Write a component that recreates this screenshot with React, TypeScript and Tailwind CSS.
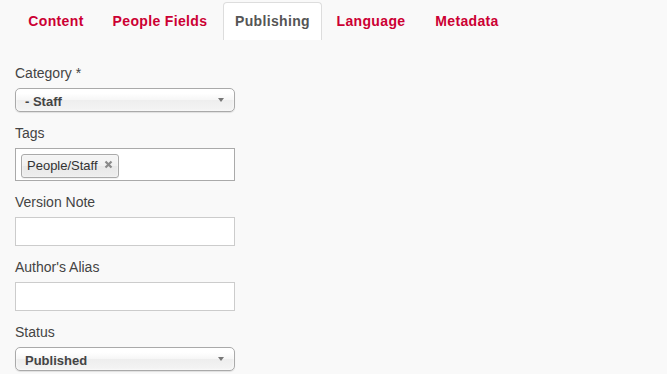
import React from "react";

const tabs = [
  { t: "Content", w: "w-[82px]" },
  { t: "People Fields", w: "w-[122px]" },
  { t: "Publishing", w: "w-[99px]" },
  { t: "Language", w: "w-[94px]" },
  { t: "Metadata", w: "w-[94px]" },
];

function Label({ children }: { children: React.ReactNode }) {
  return <div className="h-[18px] leading-[18px] text-[14px] text-[#444] mb-[6px]">{children}</div>;
}

function Select({ value }: { value: string }) {
  return (
    <div className="relative w-[220px] h-[24px] rounded-[5px] border border-[#aaa] bg-[linear-gradient(#ffffff_20%,#f6f6f6_50%,#eeeeee_52%,#f4f4f4_100%)] shadow-[inset_0_0_3px_#fff,0_1px_1px_rgba(0,0,0,0.1)] pl-[9px] leading-[26px] text-[13px] font-bold text-[#444]">
      {value}
      <svg className="absolute right-[10px] top-[9px]" width="6" height="4" viewBox="0 0 6 4">
        <path d="M0 0 L6 0 L3 4 Z" fill="#777" />
      </svg>
    </div>
  );
}

function Input() {
  return <div className="w-[220px] h-[29px] border border-[#ccc] bg-white" />;
}

export default function App() {
  return (
    <div className="w-[667px] h-[374px] overflow-hidden bg-[#f9f9f9] font-['Liberation_Sans',Arial,sans-serif]">
      <div className="flex pt-[2px] pl-[15px] h-[40px]">
        {tabs.map(({ t, w }) => {
          const active = t === "Publishing";
          return (
            <div
              key={t}
              className={
                "mr-[2px] flex justify-center pt-[8px] pb-[8px] leading-[20px] text-[14px] font-bold tracking-[0.35px] whitespace-nowrap border border-b-0 rounded-t-[4px] " +
                w +
                " " +
                (active ? "bg-white border-[#ddd] text-[#555]" : "border-transparent text-[#cc0033]")
              }
            >
              {t}
            </div>
          );
        })}
      </div>
      <div className="pl-[15px] pt-[24px]">
        <Label>Category *</Label>
        <Select value="- Staff" />
        <div className="h-[12px]" />
        <Label>Tags</Label>
        <div className="w-[220px] h-[33px] border border-[#aaa] bg-white pl-[5px] pt-[4px]">
          <div className="relative inline-flex items-center h-[24px] pl-[5px] pr-[20px] rounded-[3px] border border-[#aaa] bg-[linear-gradient(#f4f4f4_20%,#f0f0f0_50%,#e8e8e8_52%,#eeeeee_100%)] shadow-[inset_0_0_2px_#fff,0_1px_0_rgba(0,0,0,0.05)] text-[13px] text-[#333]">
            People/Staff
            <svg className="absolute right-[5px] top-[5px]" width="9" height="9" viewBox="0 0 9 9">
              <path d="M1.5 1.5 L7.5 7.5 M7.5 1.5 L1.5 7.5" stroke="#8a8a8a" strokeWidth="2.2" />
            </svg>
          </div>
        </div>
        <div className="h-[12px]" />
        <Label>Version Note</Label>
        <Input />
        <div className="h-[12px]" />
        <Label>Author's Alias</Label>
        <Input />
        <div className="h-[12px]" />
        <Label>Status</Label>
        <Select value="Published" />
      </div>
    </div>
  );
}
